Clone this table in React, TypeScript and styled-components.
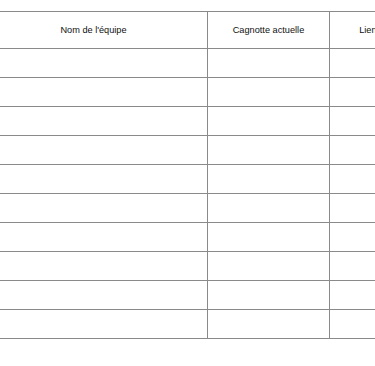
import React from "react";
import styled, { createGlobalStyle } from "styled-components";

const Global = createGlobalStyle`
  html, body { margin: 0; padding: 0; background: #ffffff; }
  body { font-family: "Liberation Sans", Arial, sans-serif; }
`;

const Wrap = styled.div`
  width: 375px;
  height: 366px;
  overflow: hidden;
  padding-top: 11px;
  box-sizing: border-box;
`;

const Table = styled.table`
  border-collapse: collapse;
  margin-left: -21px;
  table-layout: fixed;
  width: 484px;
`;

const Th = styled.th<{ $w: number }>`
  width: ${(p) => p.$w}px;
  height: 36px;
  padding: 0;
  border: 1px solid #8a8a8a;
  font-weight: normal;
  font-size: 9.2px;
  color: #111;
  text-align: center;
  white-space: nowrap;
  overflow: hidden;
`;

const Td = styled.td`
  height: 28px;
  padding: 0;
  border: 1px solid #8a8a8a;
`;

const cols = [
  { label: "Nom de l'équipe", w: 227 },
  { label: "Cagnotte actuelle", w: 121 },
  { label: "Lien de la cagnotte", w: 136 },
];

export default function App() {
  const rows = Array.from({ length: 10 });
  return (
    <>
      <Global />
      <Wrap>
        <Table>
          <thead>
            <tr>
              {cols.map((c) => (
                <Th key={c.label} $w={c.w}>
                  {c.label}
                </Th>
              ))}
            </tr>
          </thead>
          <tbody>
            {rows.map((_, i) => (
              <tr key={i}>
                {cols.map((c) => (
                  <Td key={c.label} />
                ))}
              </tr>
            ))}
          </tbody>
        </Table>
      </Wrap>
    </>
  );
}
